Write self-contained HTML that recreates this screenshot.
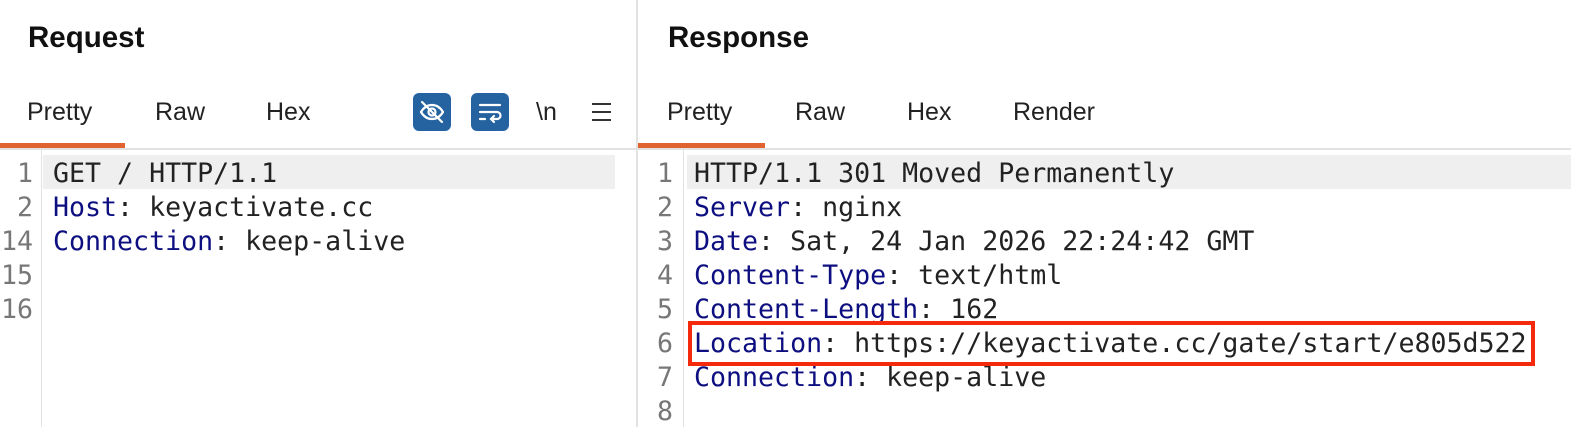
<!DOCTYPE html>
<html><head><meta charset="utf-8"><style>
*{margin:0;padding:0;box-sizing:border-box}
body{width:1571px;height:427px;background:#fff;position:relative;overflow:hidden;font-family:"Liberation Sans",sans-serif;color:#111}
.a{position:absolute}
.h{font-weight:bold;font-size:29.5px;top:21px}
.tab{font-size:25px;top:98px;color:#222}
.code{font-family:"DejaVu Sans Mono","Liberation Mono",monospace;font-size:26.6px;line-height:34px;white-space:pre;color:#222}
.k{color:#0d0f80}
.num{font-family:"DejaVu Sans Mono","Liberation Mono",monospace;font-size:26.6px;line-height:34px;color:#777;text-align:right;white-space:pre}
</style></head><body>
<div class="a" style="left:636px;top:0;width:2px;height:427px;background:#e2e2e2"></div>
<div class="a" style="left:0;top:148px;width:1571px;height:2px;background:#e2e2e2"></div>
<div class="a h" style="left:28px">Request</div>
<div class="a h" style="left:668px">Response</div>
<div class="a tab" style="left:27px">Pretty</div>
<div class="a tab" style="left:155px">Raw</div>
<div class="a tab" style="left:266px">Hex</div>
<div class="a tab" style="left:667px">Pretty</div>
<div class="a tab" style="left:795px">Raw</div>
<div class="a tab" style="left:907px">Hex</div>
<div class="a tab" style="left:1013px">Render</div>
<div class="a" style="left:0;top:143px;width:125px;height:5px;background:#e0622e"></div>
<div class="a" style="left:638px;top:143px;width:127px;height:5px;background:#e0622e"></div>
<div class="a" style="left:413px;top:93px;width:38px;height:38px;background:#2563a0;border-radius:6px">
<svg width="38" height="38" viewBox="0 0 38 38" fill="none" stroke="#fff" stroke-width="2.2" stroke-linecap="round"><path d="M8 19c3-5 7-7 11-7s8 2 11 7c-3 5-7 7-11 7s-8-2-11-7z"/><circle cx="19" cy="19" r="3.5"/><path d="M9 9l20 20"/></svg></div>
<div class="a" style="left:471px;top:93px;width:38px;height:38px;background:#2563a0;border-radius:6px">
<svg width="38" height="38" viewBox="0 0 38 38" fill="none" stroke="#fff" stroke-width="2.2" stroke-linecap="round"><path d="M9 12h20M9 19h17a3.5 3.5 0 0 1 0 7h-5M9 26h5"/><path d="M23 23l-3 3 3 3"/></svg></div>
<div class="a" style="left:536px;top:98px;font-size:25px;color:#222">\n</div>
<div class="a" style="left:592px;top:103px;width:19px;height:2px;background:#333;box-shadow:0 8px 0 #333,0 16px 0 #333"></div>
<div class="a" style="left:41px;top:150px;width:1px;height:277px;background:#e2e2e2"></div>
<div class="a" style="left:683px;top:150px;width:1px;height:277px;background:#e2e2e2"></div>
<div class="a" style="left:43px;top:155px;width:572px;height:34px;background:#efefef"></div>
<div class="a" style="left:687px;top:155px;width:884px;height:34px;background:#efefef"></div>
<div class="a num" style="left:0;top:157px;width:33px">1
2
14
15
16</div>
<div class="a code" style="left:53px;top:157px">GET / HTTP/1.1
<span class="k">Host</span>: keyactivate.cc
<span class="k">Connection</span>: keep-alive</div>
<div class="a num" style="left:640px;top:157px;width:33px">1
2
3
4
5
6
7
8</div>
<div class="a code" style="left:694px;top:157px">HTTP/1.1 301 Moved Permanently
<span class="k">Server</span>: nginx
<span class="k">Date</span>: Sat, 24 Jan 2026 22:24:42 GMT
<span class="k">Content-Type</span>: text/html
<span class="k">Content-Length</span>: 162
<span class="k">Location</span>: https://keyactivate.cc/gate/start/e805d522
<span class="k">Connection</span>: keep-alive</div>
<div class="a" style="left:688px;top:321px;width:847px;height:45px;border:4px solid #f5290c"></div>
</body></html>
